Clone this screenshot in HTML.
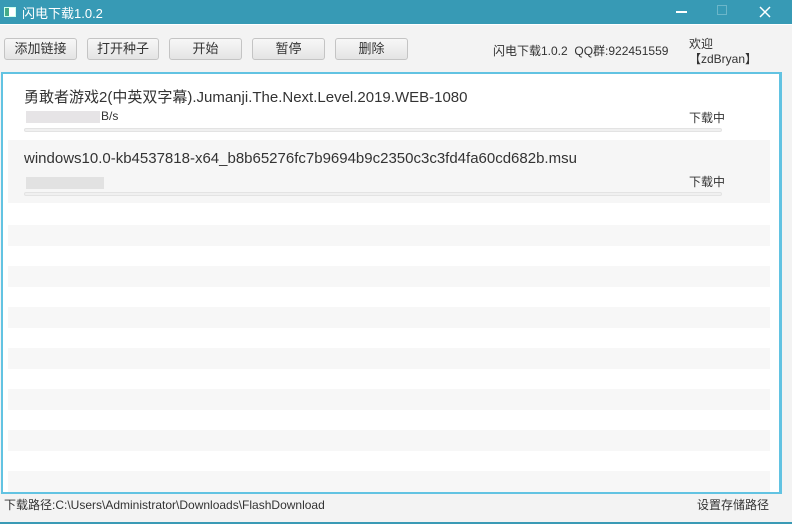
<!DOCTYPE html>
<html><head><meta charset="utf-8"><style>
*{margin:0;padding:0;box-sizing:border-box}
body{width:792px;height:524px;background:#f3f3f3;font-family:"Liberation Sans","Noto Sans CJK SC",sans-serif;position:relative;overflow:hidden;color:#333}
.a{position:absolute}
.title{left:0;top:0;width:792px;height:24px;background:#379ab5}
.btn{top:38px;height:22px;border:1px solid #c4c4c4;border-radius:3px;background:linear-gradient(#f7f7f7,#e4e4e4);font-size:13px;text-align:center;line-height:20px;color:#333}
.list{left:1px;top:72px;width:781px;height:422px;border:2px solid #62c3e2;border-right-width:3px;background:#fff}
.stripe{left:8px;width:762px;height:21px;background:#f7f7f7}
.bar{height:4px;border:1px solid #e3e3e3;border-radius:2px;background:#f0f0f0;left:24px;width:698px}
.blur{background:#e2e2e2;height:12px}
</style></head><body>
<div class="a title"></div>
<div class="a" style="left:4px;top:7px;width:12px;height:10px;background:#fff;border:1px solid #cfe"><div style="width:4px;height:8px;background:#4a8;"></div></div>
<div class="a" style="left:22px;top:3px;font-size:13px;color:#fff">闪电下载1.0.2</div>
<div class="a" style="left:676px;top:11px;width:11px;height:2px;background:#fff"></div>
<div class="a" style="left:717px;top:5px;width:10px;height:10px;border:1px solid #6cb6c9"></div>
<svg class="a" style="left:759px;top:6px" width="12" height="12"><path d="M1 1L11 11M11 1L1 11" stroke="#fff" stroke-width="1.5"/></svg>
<div class="a" style="left:0;top:24px;width:792px;height:1px;background:#fff"></div>
<div class="a btn" style="left:4px;width:73px">添加链接</div>
<div class="a btn" style="left:87px;width:72px">打开种子</div>
<div class="a btn" style="left:169px;width:73px">开始</div>
<div class="a btn" style="left:252px;width:73px">暂停</div>
<div class="a btn" style="left:335px;width:73px">删除</div>
<div class="a" style="left:493px;top:42px;font-size:12px">闪电下载1.0.2&nbsp;&nbsp;QQ群:922451559</div>
<div class="a" style="left:689px;top:37px;font-size:12px;line-height:15px">欢迎<br>【zdBryan】</div>
<div class="a list"></div>
<div class="a" style="left:8px;top:140px;width:762px;height:63px;background:#f6f6f6"></div>
<div class="a stripe" style="top:225px"></div>
<div class="a stripe" style="top:266px"></div>
<div class="a stripe" style="top:307px"></div>
<div class="a stripe" style="top:348px"></div>
<div class="a stripe" style="top:389px"></div>
<div class="a stripe" style="top:430px"></div>
<div class="a stripe" style="top:471px"></div>
<div class="a" style="left:24px;top:86px;font-size:15px;color:#333">勇敢者游戏2(中英双字幕).Jumanji.The.Next.Level.2019.WEB-1080</div>
<div class="a blur" style="left:26px;top:111px;width:74px;background:#e6e4e6"></div>
<div class="a" style="left:101px;top:109px;font-size:12px">B/s</div>
<div class="a" style="left:689px;top:109px;font-size:12px">下载中</div>
<div class="a bar" style="top:128px"></div>
<div class="a" style="left:24px;top:150px;font-size:15px;color:#333">windows10.0-kb4537818-x64_b8b65276fc7b9694b9c2350c3c3fd4fa60cd682b.msu</div>
<div class="a blur" style="left:26px;top:177px;width:78px"></div>
<div class="a" style="left:689px;top:173px;font-size:12px">下载中</div>
<div class="a bar" style="top:192px"></div>
<div class="a" style="left:4px;top:496px;font-size:12px">下载路径:C:\Users\Administrator\Downloads\FlashDownload</div>
<div class="a" style="left:697px;top:496px;font-size:12px">设置存储路径</div>
<div class="a" style="left:0;top:522px;width:792px;height:2px;background:#3a9ab5"></div>
</body></html>
